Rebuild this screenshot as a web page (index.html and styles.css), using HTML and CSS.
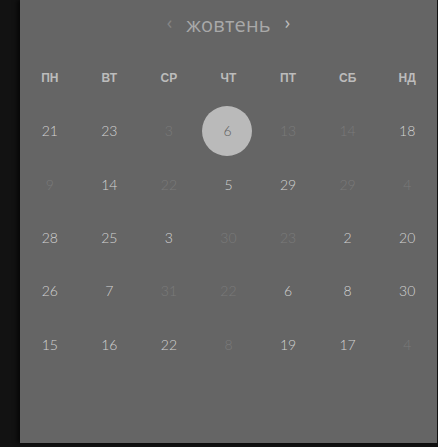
FILE: index.html
```html
<!DOCTYPE html>
<html lang="uk">
<head>
<meta charset="utf-8">
<link rel="stylesheet" href="styles.css">
</head>
<body>
<div class="page">
  <div class="panel">
    <div class="title">
      <span class="arrow arrow-prev">‹</span>
      <span class="month">жовтень</span>
      <span class="arrow arrow-next">›</span>
    </div>
    <div class="grid">
      <div class="dow">ПН</div><div class="dow">ВТ</div><div class="dow">СР</div><div class="dow">ЧТ</div><div class="dow">ПТ</div><div class="dow">СБ</div><div class="dow">НД</div>

      <div class="day">21</div><div class="day">23</div><div class="day off">3</div><div class="day"><span class="sel">6</span></div><div class="day off">13</div><div class="day off">14</div><div class="day">18</div>

      <div class="day off">9</div><div class="day">14</div><div class="day off">22</div><div class="day">5</div><div class="day">29</div><div class="day off">29</div><div class="day off">4</div>

      <div class="day">28</div><div class="day">25</div><div class="day">3</div><div class="day off">30</div><div class="day off">23</div><div class="day">2</div><div class="day">20</div>

      <div class="day">26</div><div class="day">7</div><div class="day off">31</div><div class="day off">22</div><div class="day">6</div><div class="day">8</div><div class="day">30</div>

      <div class="day">15</div><div class="day">16</div><div class="day">22</div><div class="day off">8</div><div class="day">19</div><div class="day">17</div><div class="day off">4</div>
    </div>
  </div>
</div>
</body>
</html>
```

FILE: styles.css
```css
html, body {
  margin: 0;
  padding: 0;
  background: #121212;
  overflow: hidden;
}

.page {
  width: 438px;
  height: 447px;
  display: flex;
}

.panel {
  margin-left: 20px;
  width: 417px;
  height: 443px;
  background: #656565;
  box-shadow: -3px 0 4px rgba(0, 0, 0, 0.6);
  display: flex;
  flex-direction: column;
}

.title {
  height: 48px;
  display: flex;
  align-items: center;
  justify-content: center;
  gap: 14px;
  font-family: "Open Sans", "Noto Sans", sans-serif;
  color: #a9a9a9;
}

.month {
  font-size: 20px;
  font-weight: 400;
  letter-spacing: 0.2px;
}

.arrow {
  font-size: 18px;
  line-height: 1;
  margin-top: -4px;
}

.arrow-prev {
  color: #858585;
}

.arrow-next {
  color: #bdbdbd;
}

.grid {
  margin-top: 3px;
  display: grid;
  grid-template-columns: repeat(7, 1fr);
  grid-auto-rows: 53.3px;
}

.dow,
.day {
  display: flex;
  align-items: center;
  justify-content: center;
}

.dow {
  font-family: "Liberation Sans", Arial, sans-serif;
  font-weight: 700;
  font-size: 12px;
  color: #bcbcbc;
}

.day {
  font-family: "Lato", "Noto Sans", sans-serif;
  font-weight: 300;
  font-size: 14px;
  color: #d2d2d2;
}

.day.off {
  color: #7a7a7a;
}

.sel {
  width: 50px;
  height: 50px;
  border-radius: 50%;
  background: #bababa;
  color: #5e5e5e;
  display: flex;
  align-items: center;
  justify-content: center;
  margin-left: -2px;
}
```
